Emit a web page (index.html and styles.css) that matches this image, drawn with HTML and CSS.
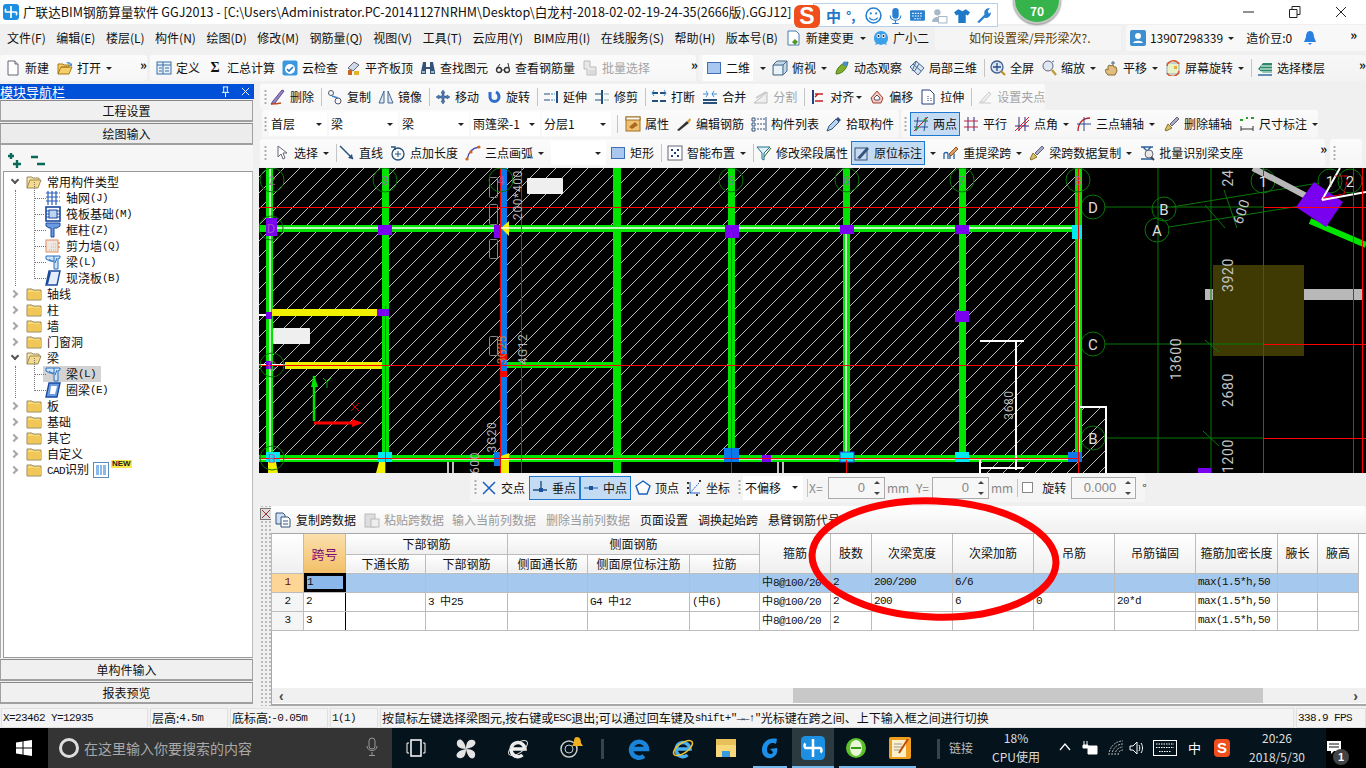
FILE: index.html
```html
<!DOCTYPE html>
<html lang="zh-CN">
<head>
<meta charset="utf-8">
<title>广联达BIM钢筋算量软件 GGJ2013</title>
<link rel="stylesheet" href="styles.css">
</head>
<body>
<svg class="defs" aria-hidden="true">
  <symbol id="doc" viewBox="0 0 16 16"><path d="M3 1h7l3 3v11H3z" fill="#fff" stroke="#667"/><path d="M10 1v3h3" fill="#dde" stroke="#667"/></symbol>
  <symbol id="open" viewBox="0 0 16 16"><path d="M1 14V4h5l1 1h5v2H4l-3 7h11l3-7H4" fill="#f5cf6b" stroke="#a87a1a"/><path d="M9 3c2-2 4-1 5 1l1-1v3h-3l1-1c-1-1-2-2-4-2" fill="#4a90d0"/></symbol>
  <symbol id="def" viewBox="0 0 16 16"><rect x="1" y="2" width="14" height="12" fill="#e8f0fa" stroke="#3a6ea5"/><path d="M1 5h14M7 2v12M3 8h3M3 11h3M9 8h4M9 11h4" stroke="#3a6ea5"/></symbol>
  <symbol id="cloud" viewBox="0 0 16 16"><rect x="0.5" y="0.5" width="15" height="15" rx="2" fill="#3a97e0"/><circle cx="8" cy="9" r="5" fill="#fff"/><path d="M5 9l2 2 4-4" stroke="#2a7ac0" stroke-width="1.6" fill="none"/></symbol>
  <symbol id="flat" viewBox="0 0 16 16"><path d="M3 8l6-6 5 3-6 6z" fill="#cfd8e8" stroke="#667"/><rect x="3" y="10" width="4" height="5" fill="#d0641c"/><rect x="9" y="11" width="5" height="4" fill="#e6b030"/></symbol>
  <symbol id="bino" viewBox="0 0 16 16"><path d="M3 2h3v5h4V2h3l2 10v2h-5V9H6v5H1v-2z" fill="#34527a"/><rect x="2" y="11" width="3" height="2" fill="#9bc"/><rect x="11" y="11" width="3" height="2" fill="#9bc"/></symbol>
  <symbol id="glass" viewBox="0 0 16 16"><circle cx="4" cy="10" r="2.5" fill="none" stroke="#333" stroke-width="1.4"/><circle cx="12" cy="10" r="2.5" fill="none" stroke="#333" stroke-width="1.4"/><path d="M6 10h4M2 8l3-4M14 8l-1-5" stroke="#333"/></symbol>
  <symbol id="batch" viewBox="0 0 16 16"><path d="M2 1h6v6h6v8H5V9H2z" fill="#e8e8e8" stroke="#bbb"/><path d="M7 11h6M7 13h6" stroke="#ccc"/></symbol>
  <symbol id="square" viewBox="0 0 16 16"><rect x="1.5" y="2.5" width="13" height="11" fill="#a9c8f0" stroke="#3f6fb5"/></symbol>
  <symbol id="cube" viewBox="0 0 16 16"><path d="M1 5l4-4h10v10l-4 4H1z" fill="#c4d8ea" stroke="#4a6a8a"/><path d="M1 5h10v10M11 5l4-4" fill="none" stroke="#4a6a8a"/><path d="M2 6h8v8H2z" fill="#eaf2fa"/></symbol>
  <symbol id="orbit" viewBox="0 0 16 16"><path d="M2 14c0-5 5-11 12-12-1 7-6 12-12 12z" fill="#7fae2c" stroke="#4c7a10"/><circle cx="11" cy="4" r="2.4" fill="#4a8ad0"/></symbol>
  <symbol id="local" viewBox="0 0 16 16"><path d="M1 7l6-6 8 7-6 7z" fill="#d8e4f2" stroke="#46688e"/><path d="M4 4l8 7M7 2l-4 9M10 4l-5 8" stroke="#46688e"/></symbol>
  <symbol id="full" viewBox="0 0 16 16"><circle cx="7" cy="7" r="6" fill="#d6e4f6" stroke="#40608e" stroke-width="1.3"/><path d="M7 3v8M3 7h8" stroke="#2a4a80" stroke-width="1.3"/><path d="M11 11l4 4" stroke="#c08a20" stroke-width="2"/></symbol>
  <symbol id="zoomi" viewBox="0 0 16 16"><circle cx="7" cy="6" r="5" fill="#dfe8f2" stroke="#667"/><path d="M11 10l4 5" stroke="#c09a30" stroke-width="2.2"/><path d="M11 2l2-1" stroke="#3070c0"/></symbol>
  <symbol id="pan" viewBox="0 0 16 16"><path d="M5 15c-3-3-3-5-2-6l2 1V6l2-1 1 1 2-1 1 2 2 0 1 4-2 4z" fill="#e2bd80" stroke="#8a6a30"/><path d="M10 1v4M8 3h4" stroke="#46688e"/></symbol>
  <symbol id="rot" viewBox="0 0 16 16"><rect x="2" y="3" width="12" height="11" fill="#e8f2c8" stroke="#9ab"/><path d="M2 6a6.5 6.5 0 0 1 12-2M14 11a6.5 6.5 0 0 1-12 2" stroke="#d85020" stroke-width="1.4" fill="none"/><rect x="9" y="6" width="3" height="3" fill="#e6b030"/></symbol>
  <symbol id="floor" viewBox="0 0 16 16"><path d="M1 9l5-6h9v10H6z" fill="#2a8a6a"/><path d="M4 6h11M3 9h12M4 12h11" stroke="#fff"/><path d="M1 15h14" stroke="#2a60a0" stroke-width="1.4"/></symbol>
  <symbol id="del" viewBox="0 0 16 16"><path d="M1 15l4-1 9-12-2-1-9 11z" fill="#9b86c8" stroke="#5a4a88"/><path d="M1 15c4 0 6 0 10-1" stroke="#c04a20" stroke-width="1.4" fill="none"/></symbol>
  <symbol id="copy" viewBox="0 0 16 16"><circle cx="4" cy="4" r="2.5" fill="none" stroke="#556"/><circle cx="11" cy="12" r="3" fill="none" stroke="#556"/><path d="M5 7l6 2" stroke="#3a86c8" stroke-width="1.4"/></symbol>
  <symbol id="mirror" viewBox="0 0 16 16"><path d="M6 2L1 14h5zM10 2l5 12h-5z" fill="#dbe8f6" stroke="#46688e"/></symbol>
  <symbol id="move" viewBox="0 0 16 16"><path d="M8 1l2 3H9v3h3V6l3 2-3 2V9H9v3h1l-2 3-2-3h1V9H4v1L1 8l3-2v1h3V4H6z" fill="#4a7ab0" stroke="#2a4a7a" stroke-width=".5"/></symbol>
  <symbol id="spin" viewBox="0 0 16 16"><path d="M4 3v5a4.5 4.5 0 0 0 9 0c0-3-1-4-3-5" fill="none" stroke="#2f6fc8" stroke-width="3"/></symbol>
  <symbol id="extend" viewBox="0 0 16 16"><path d="M14 2v12" stroke="#24507a" stroke-width="2"/><path d="M1 5h6M1 11h6" stroke="#24507a"/><path d="M8 5h4M8 11h4" stroke="#2a8ad0" stroke-dasharray="2 1"/></symbol>
  <symbol id="trim" viewBox="0 0 16 16"><path d="M8 1v14" stroke="#24507a" stroke-width="2"/><path d="M1 5h6M1 11h6" stroke="#24507a"/><path d="M10 5h5M10 11h5" stroke="#8aa"/></symbol>
  <symbol id="break" viewBox="0 0 16 16"><path d="M1 4h6M9 4h6M1 12h6M9 12h6" stroke="#24507a" stroke-width="2"/><path d="M3 1L1 4l2 3M13 1l2 3-2 3" stroke="#3a90d8" fill="none"/></symbol>
  <symbol id="merge" viewBox="0 0 16 16"><path d="M1 11h14M1 14h14" stroke="#24507a" stroke-width="2"/><path d="M1 5h5M10 5h5M4 2l2 3-2 3M12 2l-2 3 2 3" stroke="#3a90d8" fill="none"/></symbol>
  <symbol id="split" viewBox="0 0 16 16"><path d="M1 14l6-5 7-6v11z" fill="#eee" stroke="#bbb"/><path d="M3 9l10-6" stroke="#ccc" stroke-width="2"/></symbol>
  <symbol id="align" viewBox="0 0 16 16"><path d="M3 1v14" stroke="#24407a" stroke-width="2"/><path d="M5 5h8M5 8l3-3M5 12h8" stroke="#c02020" stroke-width="1.4"/></symbol>
  <symbol id="offset" viewBox="0 0 16 16"><path d="M8 2l6 7-2 5H4L2 9z" fill="#f2c8c0" stroke="#a04030"/><path d="M8 6l3 3-1 2H6L5 9z" fill="#fff" stroke="#556"/></symbol>
  <symbol id="stretch" viewBox="0 0 16 16"><path d="M2 1h8l4 4v10H2z" fill="#fff" stroke="#24407a"/><path d="M8 7v6M11 9v4" stroke="#24407a" stroke-dasharray="1 1"/></symbol>
  <symbol id="grip2" viewBox="0 0 16 16"><path d="M2 14h12" stroke="#ccc"/><path d="M3 13l9-10 2 2-7 8z" fill="#eee" stroke="#ccc"/></symbol>
  <symbol id="prop" viewBox="0 0 16 16"><rect x="1" y="1" width="14" height="14" fill="#f0c070" stroke="#a07020"/><rect x="1" y="1" width="14" height="3" fill="#fff" stroke="#a07020"/><path d="M4 11l6-5 3 3-6 4z" fill="#a86a1c"/></symbol>
  <symbol id="edit" viewBox="0 0 16 16"><path d="M1 14l10-9 2 2-10 8z" fill="#333"/><path d="M11 5l3-3 1 2-2 3z" fill="#d8a040"/></symbol>
  <symbol id="list" viewBox="0 0 16 16"><path d="M1 2h3v3H1zM1 7h3v3H1zM1 12h3v3H1z" fill="none" stroke="#34527a"/><path d="M6 3h8M6 8h8M6 13h8" stroke="#34527a" stroke-dasharray="2 1"/><path d="M15 1v14" stroke="#34527a"/></symbol>
  <symbol id="pick" viewBox="0 0 16 16"><path d="M1 15l2-5 7-7 3 3-7 7z" fill="#b8d4f0" stroke="#34527a"/><path d="M10 3l2-2 3 3-2 2z" fill="#34527a"/></symbol>
  <symbol id="two" viewBox="0 0 16 16"><path d="M5 1L3 15M13 1l-2 14M1 5h14M1 11h14" stroke="#2a4a90"/><path d="M1 15L15 1" stroke="#c02020"/><circle cx="4" cy="12" r="1.5" fill="#2a9a2a"/><circle cx="12" cy="4" r="1.5" fill="#2a9a2a"/></symbol>
  <symbol id="parallel" viewBox="0 0 16 16"><path d="M5 1v14M11 1v14" stroke="#2a2a80"/><path d="M1 5h14M1 11h14" stroke="#c02040"/></symbol>
  <symbol id="angle" viewBox="0 0 16 16"><path d="M5 1v14M11 1v14M1 10h14" stroke="#2a2a80"/><path d="M1 15L15 1M4 15L15 4" stroke="#d02020"/></symbol>
  <symbol id="arc3" viewBox="0 0 16 16"><path d="M2 15C2 7 7 2 14 2" stroke="#c02020" fill="none" stroke-width="1.3"/><path d="M8 1v14M1 8h14" stroke="#2a4a90"/></symbol>
  <symbol id="dim" viewBox="0 0 16 16"><path d="M2 13h12M2 10v5M14 10v5" stroke="#333"/><path d="M1 4h3M7 2h2M12 2h3" stroke="#2a9a2a" stroke-width="2"/></symbol>
  <symbol id="arrow" viewBox="0 0 16 16"><path d="M4 1v11l3-3 2 5 2-1-2-5h4z" fill="#fff" stroke="#667"/></symbol>
  <symbol id="line" viewBox="0 0 16 16"><path d="M1 1l13 13" stroke="#24507a" stroke-width="1.4"/><path d="M14 14l-5-1 4-4z" fill="#24507a"/></symbol>
  <symbol id="ptlen" viewBox="0 0 16 16"><circle cx="8" cy="9" r="6" fill="none" stroke="#24507a" stroke-width="1.3"/><path d="M8 6v6M5 9h6" stroke="#24507a"/><path d="M1 2h4v3" stroke="#24507a" fill="none" stroke-width="1.4"/></symbol>
  <symbol id="arc" viewBox="0 0 16 16"><path d="M2 15C3 8 7 3 14 2" stroke="#44a" fill="none" stroke-width="1.3"/><circle cx="2" cy="14" r="1.6" fill="#d0641c"/><circle cx="14" cy="2" r="1.6" fill="#d0641c"/><circle cx="6" cy="7" r="1.6" fill="#d0641c"/></symbol>
  <symbol id="smart" viewBox="0 0 16 16"><rect x="1" y="1" width="14" height="14" fill="#fff" stroke="#667"/><path d="M4 4h2v2H4zM10 4h2v2h-2zM4 10h2v2H4zM10 10h2v2h-2zM7 7h2v2H7z" fill="#24407a"/></symbol>
  <symbol id="modseg" viewBox="0 0 16 16"><path d="M1 2h13L8 8v7L6 14V8z" fill="#dff0f6" stroke="#207090"/><path d="M8 12l7-9" stroke="#2a6a20"/></symbol>
  <symbol id="orig" viewBox="0 0 16 16"><rect x="1" y="3" width="12" height="12" fill="#c8daf0" stroke="#34527a"/><path d="M3 13l10-11 2 2-9 10z" fill="#34527a"/></symbol>
  <symbol id="relift" viewBox="0 0 16 16"><path d="M1 14V9c0-2 4-2 4 0v5M7 14V9c0-2 4-2 4 0v5" fill="none" stroke="#2a60a0" stroke-width="1.3"/><path d="M6 9l7-7 2 2-7 7z" fill="#d8a060" stroke="#a05a20"/></symbol>
  <symbol id="brush" viewBox="0 0 16 16"><path d="M1 14l3-6 4 4-6 3z" fill="#d8c070" stroke="#8a7020"/><path d="M6 8l7-7 2 2-7 7z" fill="#a8a8c8" stroke="#667"/></symbol>
  <symbol id="batchid" viewBox="0 0 16 16"><path d="M2 2h12M2 14h12M4 2l4 4M12 2L8 6" stroke="#2a60a0" stroke-width="1.4"/><circle cx="10" cy="9" r="4" fill="#e8e8e8" stroke="#667"/><path d="M12 12l3 3" stroke="#445" stroke-width="2"/></symbol>
  <symbol id="cross" viewBox="0 0 16 16"><path d="M2 2l12 12M14 2L2 14" stroke="#1a60c0" stroke-width="1.5"/></symbol>
  <symbol id="perp" viewBox="0 0 16 16"><path d="M1 10h14M9 1v9" stroke="#24507a" stroke-width="1.4"/><rect x="7" y="8" width="4" height="4" fill="#1a50a0"/></symbol>
  <symbol id="mid" viewBox="0 0 16 16"><path d="M1 8h14" stroke="#4a7ab0" stroke-width="1.4"/><rect x="6" y="6" width="4" height="4" fill="#1a50a0"/></symbol>
  <symbol id="vertex" viewBox="0 0 16 16"><path d="M8 1l7 5-3 8H4L1 6z" fill="#fff" stroke="#1a60c0" stroke-width="1.4"/></symbol>
  <symbol id="coord" viewBox="0 0 16 16"><path d="M4 2v11h10" stroke="#1a60c0" fill="none"/><path d="M4 13l9-10" stroke="#1a60c0" stroke-dasharray="2 1"/><path d="M1 3h2M1 8h2M1 13h2M13 1h2M10 15h2" stroke="#333" stroke-width="2"/></symbol>
  <symbol id="paste" viewBox="0 0 16 16"><rect x="1" y="2" width="10" height="13" fill="#ddd" stroke="#bbb"/><rect x="7" y="7" width="8" height="8" fill="#eee" stroke="#bbb"/></symbol>
  <symbol id="copy2" viewBox="0 0 16 16"><path d="M1 1h7l2 2v9H1z" fill="#cfe0f4" stroke="#34527a"/><path d="M6 5h7l2 2v8H6z" fill="#fff" stroke="#34527a"/><path d="M8 9h5M8 12h5" stroke="#34527a"/></symbol>
  <symbol id="folder" viewBox="0 0 16 16"><path d="M1 3h5l1 1h8v10H1z" fill="#f8d878" stroke="#9a8a5a"/><path d="M2 6h13v7H2z" fill="#f3c757"/></symbol>
  <symbol id="folderopen" viewBox="0 0 16 16"><path d="M1 14V3h5l1 1h6v2" fill="#f8e4a8" stroke="#9a8a5a"/><path d="M1 14l3-8h11l-3 8z" fill="#f6d98a" stroke="#9a8a5a"/></symbol>
  <symbol id="gridi" viewBox="0 0 16 16"><path d="M1 3h12M1 7h12M1 11h12M3 1v14M7 1v14M11 1v14" stroke="#2a60b8" stroke-width="1.2"/><path d="M14 3h2M14 7h2M14 11h2" stroke="#2a60b8" stroke-dasharray="1 1"/></symbol>
  <symbol id="raft" viewBox="0 0 16 16"><rect x="1" y="1" width="14" height="14" fill="none" stroke="#1a4aa0" stroke-width="1.6"/><rect x="4" y="4" width="8" height="8" fill="#bcd4f0" stroke="#1a4aa0"/><path d="M1 5h3M1 8h3M1 11h3M12 5h3M12 8h3M12 11h3" stroke="#1a4aa0"/></symbol>
  <symbol id="col" viewBox="0 0 16 16"><path d="M1 1h14v3l-3 2H9v9H6V6H4L1 4z" fill="#6a9ae0" stroke="#1a4aa0"/></symbol>
  <symbol id="wall" viewBox="0 0 16 16"><rect x="1" y="2" width="12" height="12" fill="#f0e6e0" stroke="#e09060"/><path d="M4 12h7M6 9h5M8 6h3" stroke="#bbb" stroke-dasharray="1 1"/><path d="M14 4v8" stroke="#d0641c" stroke-dasharray="2 2"/></symbol>
  <symbol id="beam" viewBox="0 0 16 16"><path d="M1 2h14v2l-2 1v10H9V7H5L1 5z" fill="#cfe4f8" stroke="#2a70c0"/><path d="M4 5l4 3M9 2v5M12 4l-2 5" stroke="#2a70c0"/></symbol>
  <symbol id="slab" viewBox="0 0 16 16"><path d="M4 1h11l-3 14H1z" fill="#e4eefa" stroke="#1a4aa0" stroke-width="1.4"/><path d="M2 14l3-12" stroke="#1a4aa0" stroke-width="2"/></symbol>
  <symbol id="ring" viewBox="0 0 16 16"><path d="M4 1h11l-3 14H1z" fill="#6a9ae0" stroke="#1a4aa0" stroke-width="1.4"/><path d="M6 4h6l-2 8H5z" fill="#fff"/></symbol>
  <symbol id="cad" viewBox="0 0 16 16"><rect x=".5" y=".5" width="15" height="15" fill="#fff" stroke="#5a8aba"/><path d="M3 3h3v10H3zM7 3h2v10H7zM10 3h3v10h-3z" fill="#8ab8e8"/></symbol>
  <symbol id="newchg" viewBox="0 0 16 16"><path d="M2 1h8l3 3v11H2z" fill="#fff" stroke="#4a7ab0"/><path d="M9 9l3 3-3 3-3-3z" fill="#4c9a20"/></symbol>
  <symbol id="xiao" viewBox="0 0 16 16"><path d="M8 1c5 0 7 4 7 7s-1 4-2 5l1 2-3-1-3 1-3-1-3 1 1-2C2 12 1 11 1 8s2-7 7-7z" fill="#3aa0ea"/><circle cx="5.5" cy="6" r="2" fill="#fff"/><circle cx="10.5" cy="6" r="2" fill="#fff"/><circle cx="5.5" cy="6" r="1" fill="#123"/><circle cx="10.5" cy="6" r="1" fill="#123"/></symbol>
  <symbol id="person" viewBox="0 0 16 16"><rect width="16" height="16" rx="2" fill="#3f8fd0"/><circle cx="8" cy="6" r="3" fill="#fff"/><path d="M3 13c1-3 9-3 10 0z" fill="#fff"/></symbol>
  <symbol id="bell" viewBox="0 0 16 16"><path d="M8 1c3 0 4 3 4 6l2 5H2l2-5c0-3 1-6 4-6z" fill="#2a80e0"/><path d="M6 13h4l-2 2z" fill="#2a80e0"/></symbol>
  <symbol id="glodon" viewBox="0 0 16 16"><rect width="16" height="16" rx="3" fill="#1c8fe0"/><path d="M8 2v12M8 8H3a2 2 0 0 1 0-3M8 8h5a2 2 0 0 1 0 3" stroke="#fff" stroke-width="1.7" fill="none"/></symbol>
</svg>

<header class="titlebar">
  <svg class="i appicon"><use href="#glodon"/></svg>
  <span class="titletext">广联达BIM钢筋算量软件 GGJ2013 - [C:\Users\Administrator.PC-20141127NRHM\Desktop\白龙村-2018-02-02-19-24-35(2666版).GGJ12]</span>
  <div class="ime">
    <span class="ime-s">S</span>
    <span class="ime-zh">中</span>
    <span class="ime-dot">°,</span>
    <svg class="ime-i" viewBox="0 0 16 16"><circle cx="8" cy="8" r="7" fill="#fff" stroke="#2a80d0" stroke-width="1.5"/><circle cx="5.5" cy="6" r="1" fill="#2a80d0"/><circle cx="10.5" cy="6" r="1" fill="#2a80d0"/><path d="M4 10c2 3 6 3 8 0" stroke="#2a80d0" fill="none"/></svg>
    <svg class="ime-i" viewBox="0 0 16 16"><rect x="5" y="1" width="6" height="10" rx="3" fill="#2a80d0"/><path d="M3 8c0 6 10 6 10 0M8 13v3M5 15.500h6" stroke="#2a80d0" fill="none"/></svg>
    <svg class="ime-i" viewBox="0 0 16 16"><rect x="1" y="3" width="14" height="10" rx="1" fill="#2a80d0"/><path d="M3 6h10M3 8.500h10M5 11h6" stroke="#fff" stroke-dasharray="1.500 1"/></svg>
    <svg class="ime-i" viewBox="0 0 16 16"><circle cx="6" cy="5" r="3" fill="#a8b8c8"/><path d="M1 14c0-6 10-6 10 0z" fill="#a8b8c8"/><rect x="7" y="9" width="8" height="6" fill="#fff" stroke="#a8b8c8"/></svg>
    <svg class="ime-i" viewBox="0 0 16 16"><path d="M5 2L1 5l2 3 2-1v8h7V7l2 1 2-3-4-3-3 2z" fill="#1f78c8"/></svg>
    <svg class="ime-i" viewBox="0 0 16 16"><path d="M2 14l7-7c-1-3 1-6 5-6l-2 3 1 2 2-1c0 4-3 6-6 5l-5 5z" fill="#2a80d0"/></svg>
  </div>
  <div class="badge70"><span>70</span></div>
  <div class="winctl">
    <svg viewBox="0 0 12 12"><path d="M0 6h11" stroke="#222"/></svg>
    <svg viewBox="0 0 12 12"><path d="M.5 3.500h7.500v8H.5zM3 3.500V.5h8v8H8" fill="none" stroke="#222"/></svg>
    <svg viewBox="0 0 12 12"><path d="M1 1l10 10M11 1L1 11" stroke="#222"/></svg>
  </div>
</header>

<nav class="menubar">
  <div class="menus">
    <span>文件(F)</span><span>编辑(E)</span><span>楼层(L)</span><span>构件(N)</span><span>绘图(D)</span><span>修改(M)</span><span>钢筋量(Q)</span><span>视图(V)</span><span>工具(T)</span><span>云应用(Y)</span><span>BIM应用(I)</span><span>在线服务(S)</span><span>帮助(H)</span><span>版本号(B)</span>
  </div>
  <div class="tb m-new"><svg class="i"><use href="#newchg"/></svg>新建变更<b class="ar"></b></div>
  <div class="tb m-xiao"><svg class="i"><use href="#xiao"/></svg>广小二</div>
  <div class="question">如何设置梁/异形梁次?.</div>
  <div class="account">
    <svg class="i"><use href="#person"/></svg><span>13907298339</span><b class="ar"></b><span class="bean">造价豆:0</span><svg class="i bell"><use href="#bell"/></svg><span class="more">»</span>
  </div>
</nav>

<div class="bar bar1">
  <div class="grp g-file">
    <div class="tb"><svg class="i"><use href="#doc"/></svg>新建</div>
    <div class="tb"><svg class="i"><use href="#open"/></svg>打开<b class="ar"></b></div>
    <span class="more">»</span>
  </div>
  <div class="grp g-calc">
    <div class="tb"><svg class="i"><use href="#def"/></svg>定义</div>
    <div class="tb"><span class="i sigma">Σ</span>汇总计算</div>
    <div class="tb"><svg class="i"><use href="#cloud"/></svg>云检查</div>
    <div class="tb"><svg class="i"><use href="#flat"/></svg>平齐板顶</div>
    <div class="tb"><svg class="i"><use href="#bino"/></svg>查找图元</div>
    <div class="tb"><svg class="i"><use href="#glass"/></svg>查看钢筋量</div>
    <div class="tb off"><svg class="i"><use href="#batch"/></svg>批量选择</div>
    <span class="more m-a">»</span>
  </div>
  <div class="grp g-view">
    <div class="tb pick2d"><svg class="i"><use href="#square"/></svg>二维</div><b class="ar"></b>
    <div class="tb"><svg class="i"><use href="#cube"/></svg>俯视<b class="ar"></b></div>
    <div class="tb"><svg class="i"><use href="#orbit"/></svg>动态观察</div>
    <div class="tb"><svg class="i"><use href="#local"/></svg>局部三维</div>
    <i class="sep"></i>
    <div class="tb"><svg class="i"><use href="#full"/></svg>全屏</div>
    <div class="tb"><svg class="i"><use href="#zoomi"/></svg>缩放<b class="ar"></b></div>
    <div class="tb"><svg class="i"><use href="#pan"/></svg>平移<b class="ar"></b></div>
    <div class="tb"><svg class="i"><use href="#rot"/></svg>屏幕旋转<b class="ar"></b></div>
    <i class="sep"></i>
    <div class="tb"><svg class="i"><use href="#floor"/></svg>选择楼层</div>
    <span class="more m-b">»</span>
  </div>
</div>

<main class="main">
  <aside class="nav">
    <div class="navtitle"><span>模块导航栏</span><span class="pin">
      <svg viewBox="0 0 12 12"><path d="M3 1h6M4 1v6M8 1v6M2 7h8M6 7v5" stroke="#fff" fill="none"/></svg>
      <svg viewBox="0 0 12 12"><path d="M2 2l8 8M10 2l-8 8" stroke="#fff"/></svg></span></div>
    <button class="navbtn">工程设置</button>
    <button class="navbtn nb2">绘图输入</button>
    <div class="navbody">
      <div class="plusminus">
        <svg viewBox="0 0 16 16"><path d="M4 0v6M1 3h6M10 7v8M6 11h8" stroke="#0a6a5a" stroke-width="2.4"/></svg>
        <svg viewBox="0 0 16 16"><path d="M1 4h7M7 11h8" stroke="#0a6a5a" stroke-width="2.400"/></svg>
      </div>
      <div class="tree">
        <div class="row root"><b class="chev down"></b><svg class="i"><use href="#folderopen"/></svg>常用构件类型</div>
        <div class="kids k6">
          <div class="row kid"><svg class="i"><use href="#gridi"/></svg>轴网<em>(J)</em></div>
          <div class="row kid"><svg class="i"><use href="#raft"/></svg>筏板基础<em>(M)</em></div>
          <div class="row kid"><svg class="i"><use href="#col"/></svg>框柱<em>(Z)</em></div>
          <div class="row kid"><svg class="i"><use href="#wall"/></svg>剪力墙<em>(Q)</em></div>
          <div class="row kid"><svg class="i"><use href="#beam"/></svg>梁<em>(L)</em></div>
          <div class="row kid"><svg class="i"><use href="#slab"/></svg>现浇板<em>(B)</em></div>
        </div>
        <div class="row root"><b class="chev"></b><svg class="i"><use href="#folder"/></svg>轴线</div>
        <div class="row root"><b class="chev"></b><svg class="i"><use href="#folder"/></svg>柱</div>
        <div class="row root"><b class="chev"></b><svg class="i"><use href="#folder"/></svg>墙</div>
        <div class="row root"><b class="chev"></b><svg class="i"><use href="#folder"/></svg>门窗洞</div>
        <div class="row root"><b class="chev down"></b><svg class="i"><use href="#folderopen"/></svg>梁</div>
        <div class="kids k2">
          <div class="row kid hl"><svg class="i"><use href="#beam"/></svg>梁<em>(L)</em></div>
          <div class="row kid"><svg class="i"><use href="#ring"/></svg>圈梁<em>(E)</em></div>
        </div>
        <div class="row root"><b class="chev"></b><svg class="i"><use href="#folder"/></svg>板</div>
        <div class="row root"><b class="chev"></b><svg class="i"><use href="#folder"/></svg>基础</div>
        <div class="row root"><b class="chev"></b><svg class="i"><use href="#folder"/></svg>其它</div>
        <div class="row root"><b class="chev"></b><svg class="i"><use href="#folder"/></svg>自定义</div>
        <div class="row root"><b class="chev"></b><svg class="i"><use href="#folder"/></svg><span class="cadname"><em>CAD</em>识别</span><svg class="i cadi"><use href="#cad"/></svg><span class="newtag">NEW</span></div>
      </div>
    </div>
    <button class="navbtn nb3">单构件输入</button>
    <button class="navbtn nb4">报表预览</button>
  </aside>

  <section class="work">
    <div class="bar bar2">
      <div class="grp g-edit">
        <i class="grip"></i>
        <div class="tb"><svg class="i"><use href="#del"/></svg>删除</div><i class="sep"></i>
        <div class="tb"><svg class="i"><use href="#copy"/></svg>复制</div>
        <div class="tb"><svg class="i"><use href="#mirror"/></svg>镜像</div><i class="sep"></i>
        <div class="tb"><svg class="i"><use href="#move"/></svg>移动</div>
        <div class="tb"><svg class="i"><use href="#spin"/></svg>旋转</div><i class="sep"></i>
        <div class="tb"><svg class="i"><use href="#extend"/></svg>延伸</div>
        <div class="tb"><svg class="i"><use href="#trim"/></svg>修剪</div><i class="sep"></i>
        <div class="tb"><svg class="i"><use href="#break"/></svg>打断</div>
        <div class="tb"><svg class="i"><use href="#merge"/></svg>合并</div>
        <div class="tb off"><svg class="i"><use href="#split"/></svg>分割</div><i class="sep"></i>
        <div class="tb"><svg class="i"><use href="#align"/></svg>对齐<b class="ar"></b></div>
        <div class="tb"><svg class="i"><use href="#offset"/></svg>偏移</div>
        <div class="tb"><svg class="i"><use href="#stretch"/></svg>拉伸</div><i class="sep"></i>
        <div class="tb off"><svg class="i"><use href="#grip2"/></svg>设置夹点</div>
      </div>
    </div>

    <div class="bar bar3">
      <div class="grp g-sel">
        <i class="grip"></i>
        <div class="sel s1">首层<b class="ar"></b></div>
        <div class="sel s2">梁<b class="ar"></b></div>
        <div class="sel s2">梁<b class="ar"></b></div>
        <div class="sel s2">雨篷梁-1<b class="ar"></b></div>
        <div class="sel s2">分层1<b class="ar"></b></div>
        <i class="sep"></i>
        <div class="tb"><svg class="i"><use href="#prop"/></svg>属性</div>
        <div class="tb"><svg class="i"><use href="#edit"/></svg>编辑钢筋</div>
        <div class="tb"><svg class="i"><use href="#list"/></svg>构件列表</div>
        <div class="tb"><svg class="i"><use href="#pick"/></svg>拾取构件</div>
      </div>
      <div class="grp g-axis">
        <i class="grip"></i>
        <div class="tb act"><svg class="i"><use href="#two"/></svg>两点</div>
        <div class="tb"><svg class="i"><use href="#parallel"/></svg>平行</div>
        <div class="tb"><svg class="i"><use href="#angle"/></svg>点角<b class="ar"></b></div>
        <div class="tb"><svg class="i"><use href="#arc3"/></svg>三点辅轴<b class="ar"></b></div>
        <div class="tb t-del"><svg class="i"><use href="#brush"/></svg>删除辅轴</div>
        <div class="tb"><svg class="i"><use href="#dim"/></svg>尺寸标注<b class="ar"></b></div>
      </div>
    </div>

    <div class="bar bar4">
      <div class="grp g-draw">
        <i class="grip"></i>
        <div class="tb"><svg class="i"><use href="#arrow"/></svg>选择<b class="ar"></b></div><i class="sep t5"></i>
        <div class="tb"><svg class="i"><use href="#line"/></svg>直线</div>
        <div class="tb"><svg class="i"><use href="#ptlen"/></svg>点加长度</div>
        <div class="tb"><svg class="i"><use href="#arc"/></svg>三点画弧<b class="ar"></b></div>
        <div class="sel s3"><b class="ar"></b></div>
        <div class="tb"><svg class="i"><use href="#square"/></svg>矩形</div><i class="sep"></i>
        <div class="tb"><svg class="i"><use href="#smart"/></svg>智能布置<b class="ar"></b></div><i class="sep t5"></i>
        <div class="tb"><svg class="i"><use href="#modseg"/></svg>修改梁段属性</div>
        <div class="tb act a2"><svg class="i"><use href="#orig"/></svg>原位标注</div><b class="ar a3"></b>
        <div class="tb"><svg class="i"><use href="#relift"/></svg>重提梁跨<b class="ar"></b></div>
        <div class="tb"><svg class="i"><use href="#brush"/></svg>梁跨数据复制<b class="ar"></b></div>
        <div class="tb"><svg class="i"><use href="#batchid"/></svg>批量识别梁支座</div>
        <span class="more m-c">»</span>
      </div>
      <div class="grp g-tail"><i class="grip"></i></div>
    </div>

    <div class="canvas">
      <svg class="cad-svg" viewBox="259 168 1107 305" aria-label="CAD">
        <defs>
          <pattern id="hatch" width="16" height="16" patternUnits="userSpaceOnUse" patternTransform="translate(4 0)">
            <path d="M0 16L16 0" stroke="#b8b8b8" stroke-width="1" shape-rendering="crispEdges"/>
          </pattern>
        </defs>
        <rect x="259" y="168" width="1107" height="305" fill="#000"/>
        <rect x="259" y="168" width="823" height="294" fill="url(#hatch)"/>
        <rect x="1082" y="407" width="24" height="66" fill="url(#hatch)"/>
        <rect x="980" y="462" width="102" height="11" fill="url(#hatch)"/>

        <rect x="1205" y="289" width="157" height="11" fill="#b8b8b8"/>
        <rect x="1213" y="265" width="91" height="91" fill="#3f3a04"/>

        <g stroke="#087808" fill="none">
          <path d="M1105 207H1263M1105 344H1263M1105 438H1263M1158 168V473M1211 168V473"/>
          <path d="M1172 207L1319 183M1169 227L1319 203M1224 190L1237 228M1205 205L1225 228M1205 340L1219 352M1203 431L1219 446"/>
          <circle cx="1093" cy="207" r="12"/><circle cx="1093" cy="344" r="12"/><circle cx="1093" cy="438" r="12"/>
          <circle cx="1164" cy="209" r="12"/><circle cx="1157" cy="230" r="12"/>
          <circle cx="1263" cy="181" r="12"/><circle cx="1330" cy="181" r="12"/><circle cx="1350" cy="181" r="12"/>
        </g>

        <path d="M1253 168L1308 197" stroke="#b8b8b8" stroke-width="6"/>
        <path d="M1310 221L1366 245" stroke="#00e400" stroke-width="6"/>
        <path d="M1314 182L1343 202 1326 227 1296 207z" fill="#7a00f0"/>
        <path d="M1322 200L1340 168M1322 200L1366 192" stroke="#fff" stroke-width="2"/>
        <path d="M1323 198L1344 194 1348 176 1335 176" stroke="#f00" fill="none" stroke-dasharray="4 1"/>

        <g fill="#00e400">
          <rect x="266" y="168" width="7" height="294"/>
          <rect x="382" y="168" width="7" height="294"/>
          <rect x="613" y="168" width="8" height="305"/>
          <rect x="728" y="168" width="7" height="294"/>
          <rect x="843" y="168" width="7" height="294"/>
          <rect x="959" y="168" width="7" height="294"/>
          <rect x="1075" y="168" width="7" height="294"/>
          <rect x="507" y="362" width="106" height="6"/>
          <rect x="259" y="225" width="823" height="7"/>
          <rect x="259" y="455" width="823" height="7"/>
        </g>
        <rect x="501" y="168" width="6" height="305" fill="#0a78e8"/>

        <g fill="#f0f000">
          <rect x="272" y="309" width="105" height="7"/>
          <rect x="285" y="362" width="97" height="7"/>
          <path d="M268 462h8l2 11h-10zM379 462h7v11h-10zM501 456l8-3v20h-8zM501 228l8-7v15z"/>
        </g>

        <g fill="none" stroke="#fff">
          <path d="M266 228H1078M259 459H1078" stroke-width="1.500"/>
          <path d="M270 168V462M846 232V455M1079 232V455" stroke-width="1.500"/>
          <path d="M259 315H272M259 365H285" stroke-width="2"/>
          <path d="M980 341H1024M1016 341V470M980 468H1024M980 460V473" stroke-width="2"/>
          <path d="M1080 407H1106V473" stroke-width="2"/>
          <path d="M448 462V473M453 462V473M778 462V473M783 462V473" stroke-width="1.500"/>
        </g>

        <g fill="#7a00f0">
          <rect x="378" y="225" width="14" height="10"/><rect x="494" y="225" width="6" height="13"/>
          <rect x="725" y="225" width="14" height="13"/><rect x="266" y="218" width="11" height="18"/>
          <rect x="840" y="225" width="14" height="9"/><rect x="955" y="225" width="14" height="9"/>
          <rect x="955" y="311" width="14" height="11"/><rect x="377" y="309" width="12" height="7"/>
          <rect x="762" y="455" width="9" height="7"/><rect x="1198" y="468" width="13" height="5"/>
          <rect x="266" y="312" width="6" height="7"/><rect x="266" y="361" width="6" height="8"/>
        </g>
        <g fill="#00e8f0">
          <rect x="266" y="452" width="14" height="10"/><rect x="378" y="452" width="14" height="10"/>
          <rect x="840" y="452" width="14" height="10"/><rect x="955" y="452" width="14" height="10"/>
          <rect x="1072" y="225" width="10" height="14"/>
        </g>
        <g fill="#0a78e8">
          <rect x="494" y="452" width="6" height="14"/><rect x="724" y="448" width="15" height="14"/><rect x="1068" y="452" width="14" height="10"/>
        </g>
        <rect x="840" y="452" width="14" height="10" fill="none" stroke="#3040e0"/>
        <g fill="#f00"><rect x="500" y="354" width="7" height="6"/><rect x="500" y="371" width="7" height="6"/></g>

        <g stroke="#f00" fill="none">
          <path d="M259 207.500H1078M259 365.500H1078M1263 207.500H1366M1263 344.500H1366M1263 438.500H1366M259 458.500H1078"/>
          <path d="M500.500 168V473M521.500 168V473M385.500 306V473M731.500 232V473M846.500 460V473M1078.500 168V473M1263.500 168V473M1353.500 168V473M1362.500 168V473"/>
        </g>
        <rect x="527" y="178" width="36" height="16" rx="1" fill="#efefef"/>
        <rect x="273" y="328" width="37" height="16" rx="1" fill="#efefef"/>

        <g stroke="#888" fill="none">
          <rect x="489.500" y="177.500" width="8" height="20" rx="1"/><rect x="489.500" y="204.500" width="8" height="20" rx="1"/>
          <rect x="489.500" y="239.500" width="8" height="19" rx="1"/><rect x="489.500" y="336.500" width="8" height="19" rx="1"/>
        </g>
        <g fill="none" stroke="#087808">
          <circle cx="272" cy="180" r="12"/><circle cx="385" cy="180" r="12"/><circle cx="501" cy="180" r="12"/><circle cx="731" cy="180" r="12"/><circle cx="847" cy="180" r="12"/><circle cx="962" cy="180" r="12"/><circle cx="1078" cy="180" r="12"/>
          <circle cx="271" cy="228" r="12"/><circle cx="272" cy="365" r="12"/><circle cx="272" cy="458" r="12"/>
        </g>
        <g class="axno">
          <text x="272" y="185">2</text><text x="385" y="185">3</text><text x="501" y="185">4</text><text x="731" y="185">5</text><text x="847" y="185">6</text><text x="962" y="185">7</text><text x="1078" y="185">8</text>
          <text x="271" y="233">D</text><text x="272" y="370">C</text><text x="272" y="463">B</text>
        </g>
        <g class="axlt">
          <text x="1093" y="213">D</text><text x="1093" y="350">C</text><text x="1093" y="444">B</text><text x="1164" y="215">B</text><text x="1157" y="236">A</text><text x="1263" y="187">1</text><text x="1330" y="187">1</text><text x="1350" y="187">2</text>
        </g>
        <g class="dimtx">
          <text transform="translate(1233 275) rotate(-90)">3920</text>
          <text transform="translate(1233 390) rotate(-90)">2680</text>
          <text transform="translate(1233 456) rotate(-90)">1200</text>
          <text transform="translate(1233 178) rotate(-90)">24</text>
          <text transform="translate(1181 359) rotate(-90)">13600</text>
          <text transform="translate(1246 213) rotate(-72)">600</text>
          <text class="sm" transform="translate(1013 405) rotate(-90)">3680</text>
          <text class="sm" transform="translate(522 195) rotate(-90)">200*400</text>
          <text class="sm" transform="translate(527 349) rotate(-90)">4G12</text>
          <text class="sm" transform="translate(496 437) rotate(-90)">3G20</text>
          <text class="sm" transform="translate(479 463) rotate(-90)">600</text>
        </g>
        <text class="dimor" transform="translate(506 350) rotate(-90)">3G25</text>
        <path d="M314 376V421" stroke="#00e400" stroke-width="2.500"/>
        <path d="M314 375l-3 12h7z" fill="#00e400"/>
        <path d="M314 423H355" stroke="#f00" stroke-width="3"/>
        <path d="M363 423l-11-4v8z" fill="#f00"/>
        <path d="M323 378l4 4 4-4M327 382v6" stroke="#00b000" fill="none"/>
        <path d="M351 403l8 8M359 403l-8 8" stroke="#e00000" fill="none"/>
      </svg>
    </div>

    <div class="snapbar">
      <div class="grp g-snap">
        <i class="grip"></i>
        <div class="tb"><svg class="i"><use href="#cross"/></svg>交点</div>
        <div class="tb act s"><svg class="i"><use href="#perp"/></svg>垂点</div>
        <div class="tb act s s-b"><svg class="i"><use href="#mid"/></svg>中点</div>
        <div class="tb"><svg class="i"><use href="#vertex"/></svg>顶点</div>
        <div class="tb t-coord"><svg class="i"><use href="#coord"/></svg>坐标</div>
        <i class="grip g2"></i>
        <div class="sel s4">不偏移<b class="ar"></b></div>
        <i class="sep"></i>
        <span class="lab dim">X=</span>
        <div class="num n1">0<span class="spin"></span></div>
        <span class="lab dim2">mm Y=</span>
        <div class="num n1">0<span class="spin"></span></div>
        <span class="lab mm2">mm</span>
        <i class="sep"></i>
        <i class="check"></i>
        <span class="lab rot">旋转</span>
        <div class="num n2">0.000<span class="spin"></span></div>
        <span class="lab deg">°</span>
      </div>
    </div>

    <div class="gridpane">
      <div class="dots"><svg viewBox="0 0 12 12"><rect x=".5" y=".5" width="11" height="11" fill="#ddd" stroke="#777"/><path d="M2 2l8 8M10 2l-8 8" stroke="#a03030"/></svg></div>
      <div class="gridmain">
        <div class="gridbar">
          <div class="tb"><svg class="i"><use href="#copy2"/></svg>复制跨数据</div>
          <div class="tb off b2"><svg class="i"><use href="#paste"/></svg>粘贴跨数据</div>
          <div class="tb off b3">输入当前列数据</div>
          <div class="tb off">删除当前列数据</div>
          <div class="tb">页面设置</div>
          <div class="tb">调换起始跨</div>
          <div class="tb">悬臂钢筋代号</div>
        </div>
        <div class="gridbox">
          <table class="grid">
            <colgroup>
              <col class="c31"><col class="c42"><col class="c80"><col class="c82"><col class="c80"><col class="c102"><col class="c70"><col class="c71"><col class="c41"><col class="c81"><col class="c81"><col class="c81"><col class="c81"><col class="c82"><col class="c40"><col class="c41">
            </colgroup>
            <thead>
              <tr class="h1"><th rowspan="2"></th><th rowspan="2" class="hot">跨号</th><th colspan="2">下部钢筋</th><th colspan="3">侧面钢筋</th><th rowspan="2">箍筋</th><th rowspan="2">肢数</th><th rowspan="2">次梁宽度</th><th rowspan="2">次梁加筋</th><th rowspan="2">吊筋</th><th rowspan="2">吊筋锚固</th><th rowspan="2">箍筋加密长度</th><th rowspan="2">腋长</th><th rowspan="2">腋高</th></tr>
              <tr><th>下通长筋</th><th>下部钢筋</th><th>侧面通长筋</th><th>侧面原位标注筋</th><th>拉筋</th></tr>
            </thead>
            <tbody>
              <tr class="cur"><td class="rn">1</td><td class="cellsel">1</td><td></td><td></td><td></td><td></td><td></td><td><u>中</u>8@100/20</td><td>2</td><td>200/200</td><td>6/6</td><td></td><td></td><td>max(1.5*h,50</td><td></td><td></td></tr>
              <tr><td class="rn">2</td><td class="kua">2</td><td></td><td>3 <u>中</u>25</td><td></td><td>G4 <u>中</u>12</td><td>(<u>中</u>6)</td><td><u>中</u>8@100/20</td><td>2</td><td>200</td><td>6</td><td>0</td><td>20*d</td><td>max(1.5*h,50</td><td></td><td></td></tr>
              <tr><td class="rn">3</td><td class="kua">3</td><td></td><td></td><td></td><td></td><td></td><td><u>中</u>8@100/20</td><td>2</td><td></td><td></td><td></td><td></td><td>max(1.5*h,50</td><td></td><td></td></tr>
            </tbody>
          </table>
          <div class="hscroll"><span class="sl">‹</span><span class="thumb"></span><span class="sr">›</span></div>
        </div>
      </div>
    </div>
    <svg class="ellipse" viewBox="0 0 270 135" aria-hidden="true"><ellipse cx="135" cy="67" rx="122" ry="58" transform="rotate(2 135 67)" fill="none" stroke="#f00" stroke-width="7"/></svg>
  </section>
</main>

<footer class="status">
  <span class="st st1">X=23462 Y=12935</span>
  <span class="st st2">层高:<em>4.5m</em></span>
  <span class="st st3">底标高:<em>-0.05m</em></span>
  <span class="st st4"><em>1(1)</em></span>
  <span class="st st5">按鼠标左键选择梁图元,按右键或<em>ESC</em>退出;可以通过回车键及<em>shift+"→←↑"</em>光标键在跨之间、上下输入框之间进行切换</span>
  <span class="st st6">338.9 FPS</span>
</footer>

<div class="taskbar">
  <div class="start"><svg viewBox="0 0 16 16"><path d="M0 2.500l6.500-1v6H0zM7.500 1.300L16 0v7.500H7.500zM0 8.500h6.500v6l-6.500-1zM7.500 8.500H16V16l-8.500-1.300z" fill="#fff"/></svg></div>
  <div class="search"><i class="cortana"></i><span>在这里输入你要搜索的内容</span>
    <svg class="mic" viewBox="0 0 12 20"><rect x="3" y="1" width="6" height="11" rx="3" fill="none" stroke="#999"/><path d="M1 9c0 6 10 6 10 0M6 15v3M3 18.500h6" stroke="#999" fill="none"/></svg></div>
  <div class="apps">
    <svg class="ti a-view" viewBox="0 0 20 20"><rect x="5" y="2" width="10" height="16" fill="none" stroke="#fff" stroke-width="1.500"/><path d="M3 5H1v10h2M17 5h2v10h-2" fill="none" stroke="#fff"/></svg>
    <svg class="ti a-pin" viewBox="0 0 24 24"><path d="M12 12C5 12 2 9 3 5s7-4 9 7zM12 12c0-7 3-10 7-9s4 7-7 9zM12 12c7 0 10 3 9 7s-7 4-9-7zM12 12c0 7-3 10-7 9s-4-7 7-9z" fill="#e4e4e4"/></svg>
    <svg class="ti a-e" viewBox="0 0 24 24"><path d="M5 13h14a7 7 0 1 0-2.500 6" fill="none" stroke="#f0f0f0" stroke-width="3.500"/><ellipse cx="12" cy="12" rx="11" ry="5" transform="rotate(-35 12 12)" fill="none" stroke="#ddd" stroke-width="1"/></svg>
    <svg class="ti a-bell" viewBox="0 0 26 24"><circle cx="11" cy="14" r="8" fill="none" stroke="#ccc" stroke-width="1.500"/><circle cx="11" cy="14" r="4" fill="none" stroke="#ccc"/><path d="M19 2c3 0 4 3 4 6l2 3H14l2-3c0-3 0-6 3-6z" fill="#f0b020"/></svg>
    <i class="tsep"></i>
    <svg class="ti a-edge" viewBox="0 0 24 24"><path d="M4 13h16a8 8 0 1 0-3 7" fill="none" stroke="#1a84d8" stroke-width="4.500"/></svg>
    <svg class="ti a-ie" viewBox="0 0 24 24"><path d="M5 13h14a7 7 0 1 0-2.500 6" fill="none" stroke="#4ab0f0" stroke-width="3.500"/><ellipse cx="12" cy="12" rx="11" ry="5" transform="rotate(-35 12 12)" fill="none" stroke="#f0c030" stroke-width="1.500"/></svg>
    <svg class="ti a-fold" viewBox="0 0 24 24"><path d="M2 3h20v18H2z" fill="#f8d878"/><path d="M2 3h20v6H2z" fill="#e8c05a"/><path d="M8 15h8v6H8z" fill="#3a9ae0"/></svg>
    <svg class="ti a-g" viewBox="0 0 24 24"><path d="M19 3c-8-2-15 3-15 11 0 6 5 9 9 8 5-1 7-6 6-10l-7 1 3 3c0 2-3 3-5 1-2-3-1-9 4-10 2 0 3 0 4 1z" fill="#1c8fe8"/></svg>
    <div class="ti a-act"><svg viewBox="0 0 16 16"><use href="#glodon"/></svg></div>
    <svg class="ti a-green" viewBox="0 0 24 24"><circle cx="12" cy="12" r="10" fill="#5dc02c"/><ellipse cx="12" cy="12" rx="6" ry="8" fill="#eaf6d8"/><path d="M7 12h10" stroke="#3a9a1a" stroke-width="2"/></svg>
    <svg class="ti a-note" viewBox="0 0 24 24"><rect x="1" y="1" width="22" height="22" rx="2" fill="#f0a020"/><rect x="4" y="4" width="14" height="17" fill="#fbf0c8"/><path d="M6 8h8M6 11h8M6 14h8" stroke="#999"/><path d="M11 17l9-14" stroke="#c04a10" stroke-width="2"/></svg>
    <i class="tsep t2"></i>
    <span class="tx-link">链接</span>
    <div class="cpu"><span>18%</span><span>CPU使用</span></div>
    <svg class="ti caret" viewBox="0 0 12 8"><path d="M1 7l5-6 5 6" fill="none" stroke="#fff" stroke-width="1.200"/></svg>
    <svg class="ti tr tr1" viewBox="0 0 16 16"><path d="M2 1v4M5 1v4M1 5h5v3H1zM6 6h9v8H6z" fill="#fff" stroke="#fff"/></svg>
    <svg class="ti tr tr2" viewBox="0 0 16 16"><path d="M1 15a14 14 0 0 1 14-14M4 15a11 11 0 0 1 11-11M7 15a8 8 0 0 1 8-8M10 15a5 5 0 0 1 5-5" fill="none" stroke="#bbb" stroke-dasharray="2 1"/></svg>
    <svg class="ti tr tr3" viewBox="0 0 16 16"><path d="M1 6h3l4-4v12l-4-4H1z" fill="none" stroke="#fff"/><path d="M10 5c1 2 1 4 0 6M12 3c2 3 2 7 0 10" stroke="#fff" fill="none"/></svg>
    <svg class="ti kb" viewBox="0 0 24 16"><rect x=".5" y=".5" width="23" height="15" fill="none" stroke="#fff"/><path d="M3 4h18M3 7.500h18M6 11.500h12" stroke="#fff" stroke-dasharray="1.500 1"/></svg>
    <span class="tray zh">中</span>
    <span class="sogou">S</span>
    <div class="clock"><span>20:26</span><span>2018/5/30</span></div>
    <div class="notify"><svg viewBox="0 0 16 16"><path d="M1 1h14v10H8l-3 3v-3H1z" fill="#fff"/><path d="M3 4h10M3 7h10" stroke="#111"/></svg><b>1</b></div>
  </div>
</div>
</body>
</html>
```
FILE: styles.css
```css
* { box-sizing: border-box; }
html, body { margin: 0; width: 1366px; height: 768px; overflow: hidden; }
body {
  display: flex; flex-direction: column; position: relative;
  background: #f0f0f0; color: #111;
  font: 12px/1 "Noto Sans CJK SC", "Liberation Sans", sans-serif;
}
.defs { display: none; }
.i { width: 16px; height: 16px; flex: none; display: block; }
em { font-style: normal; }

/* title bar */
.titlebar { height: 24px; flex: none; background: #fff; display: flex; align-items: center; padding-left: 3px; position: relative; }
.appicon { margin-right: 4px; }
.titletext { font-size: 12.6px; white-space: nowrap; color: #111; }
.ime {
  position: absolute; left: 813px; top: 3px; width: 185px; height: 24px; z-index: 5;
  background: #fff; border: 1px solid #b8d0e8; display: flex; align-items: center; gap: 5px; padding-left: 12px;
}
.ime-s {
  position: absolute; left: -20px; top: 1px; width: 26px; height: 23px; background: #f04e1c; border-radius: 6px;
  color: #fff; font: 700 23px/23px "Liberation Sans", sans-serif; text-align: center;
}
.ime-zh { color: #1f78c8; font-size: 15px; font-weight: 700; }
.ime-dot { color: #1f78c8; font-size: 13px; font-weight: 700; width: 14px; }
.ime-i { width: 17px; height: 17px; flex: none; }
.badge70 {
  position: absolute; left: 1013px; top: -24px; width: 48px; height: 48px; border-radius: 50%; z-index: 5;
  background: #36b34a; border: 2px solid #c4c8c4; box-shadow: 0 1px 2px #888;
  color: #fff; font-size: 12px; font-weight: 700; text-align: center; padding-top: 27px;
}
.winctl { margin-left: auto; display: flex; gap: 34px; padding-right: 19px; }
.winctl svg { width: 12px; height: 12px; }

/* menu bar */
.menubar { height: 30px; flex: none; display: flex; align-items: center; padding: 0 0 2px 7px; position: relative; }
.menus { display: flex; gap: 10.5px; white-space: nowrap; }
.tb { display: flex; align-items: center; gap: 4px; white-space: nowrap; flex: none; }
.tb.off { color: #a4a4a4; }
.m-new { margin-left: 8px; }
.m-new .ar { margin-left: 2px; }
.m-xiao { margin-left: 7px; }
.question {
  margin-left: 6px; width: 186px; height: 24px; background: #f5f5f5; color: #5c3a00;
  display: flex; align-items: center; padding-left: 34px; white-space: nowrap;
}
.account {
  margin-left: 5px; flex: 1; height: 26px; background: #f8f8f8; display: flex; align-items: center; padding-left: 4px; gap: 4px;
  border-radius: 3px 0 0 3px;
}
.bean { margin-left: 8px; }
.bell { margin-left: 6px; }
.account .more { margin-left: 28px; color: #111; }
.ar {
  display: inline-block; width: 0; height: 0; flex: none; margin-left: 1px;
  border-left: 3px solid transparent; border-right: 3px solid transparent; border-top: 3px solid #222;
}
.more { font-size: 13px; font-weight: 700; line-height: 10px; align-self: flex-start; margin-top: 5px; }

/* toolbars */
.bar { display: flex; flex: none; }
.grp {
  display: flex; align-items: center; gap: 7.5px; height: 100%;
  background: linear-gradient(#fbfbfb, #f6f6f6); border-radius: 3px;
}
.sep { width: 1px; height: 18px; background: #c4c4c4; flex: none; margin-right: -2px; }
.grip {
  width: 3px; height: 17px; flex: none;
  background: radial-gradient(circle, #aaa 1px, transparent 1.2px) 0 0/3px 4px repeat-y;
}
.bar1 { height: 26px; margin: 1px 0 3px; }
.g-file { width: 150px; padding-left: 5px; gap: 6px; position: relative; }
.g-file .tb + .tb { margin-left: 2px; }
.g-file .more { margin-left: 22px; }
.g-calc { width: 546px; margin-left: 3px; padding-left: 6px; gap: 7px; }
.sigma { font: 700 14px/16px "Liberation Serif", serif; text-align: center; }
.m-a { margin-left: 34px; }
.g-view { margin-left: 3px; flex: 1; padding-left: 4px; background: linear-gradient(#f7f7f7, #f3f3f3); gap: 7px; }
.pick2d { background: #fff; height: 26px; padding: 0 5px 0 3px; width: 50px; }
.g-view > .ar { margin: 0 -1px 0 0; }
.m-b { margin-left: 27px; }

.main { flex: 1; display: flex; min-height: 0; }
.nav { width: 259px; flex: none; display: flex; flex-direction: column; }
.navtitle {
  width: 254px; height: 15px; background: #0050d8; color: #fff; font-size: 13px; display: flex; justify-content: space-between; align-items: center;
}
.pin { display: flex; gap: 9px; padding-right: 3px; }
.pin svg { width: 11px; height: 11px; }
.navbtn {
  width: 253px; height: 22px; flex: none; padding: 0; font: inherit; color: #111; letter-spacing: 0;
  background: #f0f0f0; border: 1px solid #a0a0a0; border-bottom-width: 2px; border-top-color: #888; margin: 1px 0 0 0;
}
.nb2 { background: #ececec; }
.navbody { width: 253px; flex: 1; min-height: 0; background: #f6f6f6; display: flex; flex-direction: column; border-left: 1px solid #aaa; }
.plusminus { height: 26px; flex: none; display: flex; gap: 7px; padding: 8px 0 0 6px; }
.plusminus svg { width: 16px; height: 16px; }
.tree { flex: 1; margin-left: 2px; background: #fff; border: 1px solid #999; border-right-color: #bbb; padding-top: 2px; }
.row { height: 16px; display: flex; align-items: center; position: relative; white-space: nowrap; gap: 5px; }
.row em { font: 11px/1 "Liberation Mono", monospace; letter-spacing: -.6px; }
.kid em { margin-left: -5px; }
.root { padding-left: 22px; }
.chev { position: absolute; left: 7px; top: 5px; width: 6px; height: 6px; border: solid #a8a8a8; border-width: 0 2px 2px 0; transform: rotate(-45deg); }
.chev.down { left: 8px; top: 3px; border-color: #555; transform: rotate(45deg); }
.kids { position: relative; }
.kids::before { content: ""; position: absolute; left: 11px; top: 0; height: 96px; border-left: 1px dotted #777; }
.k2::before { height: 32px; }
.kid { padding-left: 41px; width: 110px; }
.kid::before { content: ""; position: absolute; left: 30px; top: -8px; width: 11px; height: 16px; border-left: 1px dotted #777; border-bottom: 1px dotted #777; }
.hl { background: linear-gradient(#d3d3d3, #d3d3d3) 39px 0/58px 16px no-repeat; }
.cadname em { font-size: 11px; }
.newtag { position: absolute; left: 107px; top: -2px; background: #fbe64a; color: #222; font: 700 8px/8px "Liberation Sans", sans-serif; padding: 0 1px; }
.cadi { margin-left: -1px; }
.nb3 { margin-top: 1px; }
.nb4 { margin-bottom: 2px; }

.work { flex: 1; min-width: 0; display: flex; flex-direction: column; position: relative; }
.bar2 { height: 26px; margin-left: 1px; }
.g-edit { padding-left: 4px; gap: 7px; }
.g-edit > .grip { margin-right: -4px; }
.g-edit .ar { margin-left: -2px; }
.bar3 { height: 28px; margin: 0 0 0 3px; }
.g-sel { gap: 2px; padding-left: 2px; width: 637px; }
.g-sel .tb { margin-left: 5px; }
.g-sel > .grip { margin-right: 0; }
.sel { background: #fff; height: 24px; display: flex; align-items: center; justify-content: space-between; padding: 0 4px 0 2px; flex: none; }
.sel .ar { margin-right: 1px; }
.s1 { width: 58px; }
.s2 { width: 69px; }
.s3 { width: 55px; justify-content: flex-end; margin-right: -3px; }
.s4 { width: 60px; margin-left: -2px; }
.g-sel .sep { margin: 0 0 0 4px; }
.g-axis { margin-left: 2px; padding-left: 3px; gap: 7px; }
.g-axis .grip { margin-right: -4px; }
.g-axis .act + .tb { margin-left: -4px; }
.g-axis .t-del { margin-left: 2px; }
.act { background: #c4dcf3; outline: 1px solid #1f78d0; outline-offset: -1px; height: 24px; padding: 0 3px; }
.bar4 { height: 28px; margin: 1px 0 0 1px; }
.g-draw { padding-left: 4px; width: 1065px; gap: 7px; }
.g-draw .t5 { margin-right: -5px; }
.a2 { margin-left: -4px; }
.a3 { margin: 0 0 0 -2px; }
.m-c { margin-left: 70px; }
.g-tail { margin-left: 5px; width: 32px; padding-left: 3px; }

.canvas { height: 305px; flex: none; background: #000; margin-top: 1px; }
.cad-svg { display: block; width: 100%; height: 100%; }
.cad-svg text { font-family: "Roboto", sans-serif; }
.axno text { fill: #a860b0; font-size: 13px; text-anchor: middle; opacity: .8; }
.axlt text { fill: #ddd; font-size: 15px; text-anchor: middle; }
.dimtx text { fill: #c4c4c4; font-size: 14px; letter-spacing: .6px; text-anchor: middle; }
.dimtx text.sm { font-size: 12px; fill: #b4b4b4; }
.cad-svg .dimor { fill: #c08040; font-size: 12px; text-anchor: middle; }

.snapbar { height: 33px; flex: none; padding: 0 0 4px 211px; }
.g-snap { width: 675px; padding-left: 4px; gap: 4px; background: #f5f5f5; }
.snapbar .tb { width: 44px; }
.snapbar .act { width: 51px; padding: 0 3px; border-radius: 0; }
.s-b { margin-left: -4px; }
.t-coord { margin-left: 3px; }
.g2 { margin-left: 4px; }
.lab { color: #888; white-space: nowrap; flex: none; }
.lab.rot { color: #111; margin: 0 1px 0 5px; }
.lab.deg { color: #333; margin-left: 2px; }
.lab.dim { margin-left: -1px; width: 15px; }
.lab.dim2 { width: 43px; margin: 0 -2px; word-spacing: 4px; }
.lab.mm2 { margin-left: -2px; }
.mm2 + .sep { margin-right: 0; }
.num {
  height: 22px; border: 1px solid #aaa; background: #f7f7f7; color: #888; font-size: 13px; position: relative; flex: none;
  display: flex; align-items: center; justify-content: flex-end; padding-right: 19px; font-family: "Liberation Sans", sans-serif;
}
.n1 { width: 57px; }
.n2 { width: 65px; }
.spin { position: absolute; right: 3px; top: 3px; width: 8px; height: 14px; }
.spin::before, .spin::after { content: ""; position: absolute; left: 1px; border-left: 3px solid transparent; border-right: 3px solid transparent; }
.spin::before { top: 0; border-bottom: 3px solid #444; }
.spin::after { bottom: 0; border-top: 3px solid #444; }
.check { width: 11px; height: 11px; border: 1px solid #888; background: #fff; flex: none; }

.gridpane { flex: 1; min-height: 0; display: flex; }
.dots {
  width: 12px; flex: none; padding-top: 2px;
  background: radial-gradient(circle, #bbb 1px, transparent 1.2px) 1px 14px/4px 4px;
}
.dots svg { width: 12px; height: 12px; display: block; margin-left: 1px; }
.gridmain { flex: 1; min-width: 0; display: flex; flex-direction: column; }
.gridbar {
  height: 27px; flex: none; display: flex; align-items: center; gap: 10px; padding-left: 4px;
  background: linear-gradient(#fff, #f0f0f0); border-radius: 3px 3px 0 0;
}
.gridbar .tb { gap: 5px; }
.gridbar .off { color: #999; }
.gridbar .b2 { margin-left: -2px; gap: 4px; }
.gridbar .b3 { margin-left: -2px; }
.gridbox { flex: 1; min-height: 0; background: #fff; border: 1px solid #a8a8a8; border-right: 0; border-bottom-width: 2px; display: flex; flex-direction: column; justify-content: space-between; }
.grid { border-collapse: collapse; table-layout: fixed; width: 1087px; margin-left: -1px; }
.c31 { width: 32px; } .c42 { width: 42px; } .c80 { width: 80px; } .c82 { width: 82px; } .c102 { width: 102px; }
.c70 { width: 70px; } .c71 { width: 71px; } .c41 { width: 41px; } .c81 { width: 81px; } .c40 { width: 40px; }
.grid th {
  font-weight: 400; height: 19px; border: 1px solid #bcbcbc; border-top: 0;
  background: linear-gradient(#fff, #efefef); padding: 0; white-space: nowrap; overflow: hidden;
}
.grid .h1 th { height: 20px; }
.grid th.hot { background: linear-gradient(#fbe0ae, #f2bf66); color: #7a0a78; font-size: 13px; }
.grid td {
  height: 19px; border: 1px solid #bcbcbc; padding: 0 0 0 2px; overflow: hidden; white-space: nowrap;
  font: 11px/1 "Liberation Mono", monospace; letter-spacing: -.6px; color: #111;
}
.grid u { text-decoration: none; font: 11px/1 "Noto Sans CJK SC", sans-serif; letter-spacing: 0; }
.grid td.rn { text-align: center; background: #f5f5f5; padding: 0; }
.grid .cur td { background: #a5c8ef; }
.grid .cur td.rn { background: #fdd594; color: #700a0a; }
.grid td.cellsel { background: #8ab8ea; outline: 3px solid #000; outline-offset: -3px; padding-left: 3px; }
.grid td.kua { border-right: 1px solid #000; }
.hscroll { height: 15px; background: #f0f0f0; display: flex; align-items: center; position: relative; margin-bottom: 1px; }
.thumb { position: absolute; left: 521px; width: 470px; height: 15px; background: #c8c8c8; }
.sl, .sr { position: absolute; font: 700 14px/14px "Liberation Sans", sans-serif; color: #444; }
.sl { left: 7px; } .sr { right: 8px; }
.ellipse { position: absolute; left: 540px; top: 408px; width: 270px; height: 135px; pointer-events: none; }

/* status */
.status { height: 22px; flex: none; display: flex; gap: 2px; padding: 2px 0 0 1px; background: #f0f0f0; }
.st { height: 20px; background: #f4f4f4; border: 1px solid #e0e0e0; display: flex; align-items: center; padding-left: 1px; white-space: nowrap; overflow: hidden; }
.st em, .st.st1, .st.st6 { font: 11px/1 "Liberation Mono", monospace; letter-spacing: -.6px; }
.st.st1 { width: 147px; } .st.st2 { width: 78px; } .st.st3 { width: 98px; } .st.st4 { width: 48px; } .st.st5 { width: 914px; } .st.st6 { width: 70px; }

/* taskbar */
.taskbar { height: 40px; flex: none; display: flex; background: #05141c; color: #fff; }
.start { width: 48px; background: #000; display: flex; align-items: center; justify-content: center; }
.start svg { width: 16px; height: 16px; }
.search { width: 344px; background: #343434; display: flex; align-items: center; padding-left: 11px; color: #a8a8a8; font-size: 14px; position: relative; }
.cortana { width: 20px; height: 20px; border: 3px solid #ddd; border-radius: 50%; margin-right: 5px; flex: none; }
.mic { position: absolute; right: 14px; top: 9px; width: 12px; height: 20px; }
.apps { flex: 1; position: relative; }
.ti { position: absolute; display: block; }
.a-view { left: 14px; top: 10px; width: 20px; height: 20px; }
.a-pin { left: 62px; top: 9px; width: 24px; height: 24px; }
.a-e { left: 114px; top: 8px; width: 24px; height: 24px; }
.a-bell { left: 166px; top: 7px; width: 26px; height: 24px; }
.tsep { position: absolute; left: 209px; top: 11px; width: 3px; height: 20px; background: #3a4448; }
.t2 { left: 545px; }
.a-edge { left: 235px; top: 8px; width: 24px; height: 24px; }
.a-ie { left: 279px; top: 8px; width: 24px; height: 24px; }
.a-fold { left: 322px; top: 8px; width: 24px; height: 24px; }
.a-g { left: 366px; top: 8px; width: 24px; height: 24px; }
.a-act { left: 400px; top: 0; width: 42px; height: 40px; background: #2c3a40; border-bottom: 2px solid #76b9ed; padding: 8px 9px 0; }
.a-act svg { width: 24px; height: 24px; display: block; }
.a-green { left: 452px; top: 8px; width: 24px; height: 24px; }
.a-note { left: 496px; top: 8px; width: 24px; height: 24px; }
.apps::before, .apps::after { content: ""; position: absolute; bottom: 0; height: 2px; background: #76b9ed; }
.apps::before { left: 361px; width: 34px; }
.apps::after { left: 447px; width: 77px; }
.tx-link { position: absolute; left: 557px; top: 14px; color: #bbb; }
.cpu { position: absolute; left: 600px; top: 4px; width: 48px; display: flex; flex-direction: column; align-items: center; gap: 7px; color: #ddd; }
.tray { position: absolute; color: #fff; }
.caret { left: 667px; top: 15px; width: 12px; height: 8px; }
.tr { top: 12px; width: 16px; height: 16px; }
.tr1 { left: 690px; }
.tr2 { left: 716px; }
.tr3 { left: 737px; }
.kb { left: 761px; top: 12px; width: 24px; height: 16px; }
.zh { left: 796px; top: 13px; font-size: 13px; }
.sogou { position: absolute; left: 822px; top: 11px; width: 16px; height: 18px; background: #f04e1c; border-radius: 4px; font: 700 15px/18px "Liberation Sans", sans-serif; text-align: center; }
.clock { position: absolute; left: 851px; top: 4px; width: 68px; display: flex; flex-direction: column; align-items: center; gap: 7px; color: #ddd; }
.notify { position: absolute; left: 934px; top: 0; width: 40px; height: 40px; background: #000; }
.notify svg { position: absolute; left: 0; top: 12px; width: 16px; height: 16px; }
.notify b { position: absolute; left: 7px; top: 21px; width: 16px; height: 16px; border-radius: 50%; background: #444; font: 700 11px/16px "Liberation Sans", sans-serif; text-align: center; }
```
